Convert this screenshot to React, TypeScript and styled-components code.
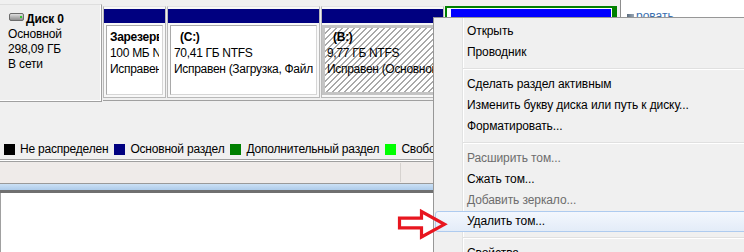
import React from "react";
import styled, { createGlobalStyle, css } from "styled-components";

const FONT = `"Liberation Sans", Arial, sans-serif`;

const GlobalStyle = createGlobalStyle`
  html, body { margin: 0; padding: 0; }
  body {
    background: #f0f0f0;
    font-family: ${FONT};
    font-size: 12px;
    color: #000;
  }
  #root { width: 744px; height: 252px; overflow: hidden; }
`;

const Screen = styled.div`
  position: relative;
  display: flex;
  width: 744px;
  height: 252px;
  overflow: hidden;
  background: #f0f0f0;
`;

const MainColumn = styled.div`
  width: 620px;
  flex: none;
  display: flex;
  flex-direction: column;
`;

const DiskRow = styled.div`
  display: flex;
  align-items: flex-start;
  padding-top: 4px;
  height: 102px;
  box-sizing: border-box;
  flex: none;
`;

const DiskInfo = styled.div`
  width: 102px;
  height: 98px;
  flex: none;
  box-sizing: border-box;
  background: #eeeeee;
  border-top: 1px solid #dedede;
  border-right: 1px solid #a0a0a0;
  border-bottom: 1px solid #a0a0a0;
  box-shadow: inset -1px -1px 0 #ffffff;
  padding: 7px 0 0 8px;
  line-height: 15px;
  letter-spacing: -0.15px;
  white-space: nowrap;
`;

const DiskTitle = styled.div`
  display: flex;
  align-items: flex-start;
  gap: 2px;
  font-weight: bold;
`;

const DiskIconSvg = styled.svg`
  flex: none;
  margin: 1px 0 0 1px;
`;

const PartitionRow = styled.div`
  display: flex;
  gap: 1px;
  margin: 2px 0 0 1px;
  padding-bottom: 2px;
  border-bottom: 1px solid #a0a0a0;
`;

const Cell = styled.div<{ $w: number }>`
  width: ${(p) => p.$w}px;
  height: 92px;
  flex: none;
  box-sizing: border-box;
  display: flex;
  flex-direction: column;
  border: 1px solid #b9b9b9;
  border-top-color: #e4e4e4;
  padding: 2px 0;
  background: #f8f8f8;
`;

const ExtendedCell = styled.div<{ $w: number }>`
  width: ${(p) => p.$w}px;
  height: 92px;
  flex: none;
  box-sizing: border-box;
  display: flex;
  flex-direction: column;
  border: 2px solid #008000;
  border-right-width: 5px;
  padding: 1px 1px 0 4px;
  background: #ffffff;
`;

const Bar = styled.div<{ $color: string }>`
  height: 14px;
  flex: none;
  background: ${(p) => p.$color};
`;

const VolumeBox = styled.div<{ $hatched?: boolean }>`
  flex: 1;
  margin: 2px 2px 0;
  border: 1px solid #a9a9a9;
  border-right-color: #d6d6d6;
  border-bottom-color: #d6d6d6;
  background: #ffffff;
  padding: 3px 3px 0 3px;
  overflow: hidden;
  line-height: 16px;
  letter-spacing: -0.3px;
  ${(p) =>
    p.$hatched &&
    css`
      margin: 2px 0 0;
      border: 3px solid #c4c4c4;
      padding: 1px 0 0 2px;
      background: repeating-linear-gradient(
        135deg,
        #ffffff 0 3.1px,
        #a9a9a9 3.1px 4.243px
      );
    `}
`;

const VolumeLine = styled.div<{ $bold?: boolean }>`
  white-space: pre;
  overflow: hidden;
  font-weight: ${(p) => (p.$bold ? "bold" : "normal")};
`;

const Legend = styled.div`
  display: flex;
  align-items: center;
  height: 16px;
  margin-top: 39px;
  padding-left: 4px;
  white-space: nowrap;
  overflow: hidden;
  letter-spacing: -0.2px;
  flex: none;
`;

const LegendItem = styled.div`
  display: flex;
  align-items: center;
  gap: 5px;
  margin-right: 6px;
  flex: none;
`;

const Swatch = styled.span<{ $color: string }>`
  width: 11px;
  height: 11px;
  flex: none;
  background: ${(p) => p.$color};
`;

const Divider = styled.div`
  margin-top: 2px;
  height: 1px;
  flex: none;
  background: #ffffff;
  border-top: 1px solid #a0a0a0;
  border-bottom: 1px solid #a0a0a0;
`;

const Toolbar = styled.div`
  height: 21px;
  flex: none;
  display: flex;
  background: #efebe9;
`;

const ToolbarSection = styled.div<{ $w: number }>`
  width: ${(p) => p.$w}px;
  margin: 1px 0;
  box-sizing: border-box;
  border-right: 1px solid #d6d2cf;
`;

const Splitter = styled.div`
  height: 6px;
  flex: none;
  border-top: 1px solid #9a9a9a;
  border-bottom: 3px solid #707070;
  background: linear-gradient(to bottom, #cbe0f5, #aecbea);
`;

const ListArea = styled.div`
  flex: 1;
  background: #ffffff;
  border-left: 1px solid #a0a0a0;
`;

const ActionsPane = styled.div`
  flex: 1;
  background: #ffffff;
  border-left: 1px solid #8d8d8d;
  padding: 9px 0 0 6px;
  line-height: 15px;
  overflow: hidden;
`;

const ActionItem = styled.div`
  display: flex;
  align-items: flex-start;
  gap: 2px;
  color: #3a6fb0;
  white-space: nowrap;
`;

const ActionIcon = styled.span`
  width: 7px;
  height: 10px;
  margin-top: 5px;
  flex: none;
  background: linear-gradient(to right, #5b6b7c, #9aa9b8);
`;

const Menu = styled.div`
  position: absolute;
  left: 433px;
  top: 17px;
  width: 330px;
  height: 260px;
  box-sizing: border-box;
  background: #f0f0f0;
  border: 1px solid #979797;
  padding: 3px 0 0 1px;
  letter-spacing: -0.1px;
  z-index: 2;
  &::before {
    content: "";
    position: absolute;
    left: 28px;
    top: 0;
    bottom: 0;
    width: 1px;
    background: #e2e3e3;
    box-shadow: 1px 0 0 #ffffff;
  }
`;

const MenuItem = styled.div<{ $disabled?: boolean; $active?: boolean }>`
  position: relative;
  z-index: 1;
  height: 21px;
  box-sizing: border-box;
  line-height: 19px;
  padding-left: 31px;
  border: 1px solid transparent;
  border-radius: 3px;
  white-space: nowrap;
  color: ${(p) => (p.$disabled ? "#6d6d6d" : "#000000")};
  ${(p) =>
    p.$active &&
    css`
      border-color: #aecbef;
      background: linear-gradient(to bottom, #f3f7fd, #e3ecf8);
    `}
`;

const MenuSeparator = styled.div`
  position: relative;
  z-index: 1;
  height: 1px;
  margin: 5px 0 5px 28px;
  background: #e0e0e0;
  box-shadow: 0 1px 0 #ffffff;
`;

const Arrow = styled.svg`
  position: absolute;
  left: 396px;
  top: 207px;
  z-index: 3;
`;

type Vol = {
  w: number;
  title: string;
  size: string;
  status: string;
  hatched?: boolean;
};

const volumes: Vol[] = [
  {
    w: 63,
    title: "Зарезервировано системой",
    size: "100 МБ NTFS",
    status: "Исправен (Система, Активен, Основной раздел)",
  },
  {
    w: 153,
    title: "  (C:)",
    size: "70,41 ГБ NTFS",
    status:
      "Исправен (Загрузка, Файл подкачки, Аварийный дамп памяти, Основной раздел)",
  },
  {
    w: 123,
    title: "  (B:)",
    size: "9,77 ГБ NTFS",
    status: "Исправен (Основной раздел)",
    hatched: true,
  },
];

const legend = [
  { color: "#000000", label: "Не распределен" },
  { color: "#000080", label: "Основной раздел" },
  { color: "#008000", label: "Дополнительный раздел" },
  { color: "#00ff00", label: "Свободно" },
  { color: "#0000ff", label: "Логический диск" },
];

type MenuEntry =
  | { sep: true }
  | { sep?: false; label: string; disabled?: boolean; active?: boolean };

const menu: MenuEntry[] = [
  { label: "Открыть" },
  { label: "Проводник" },
  { sep: true },
  { label: "Сделать раздел активным" },
  { label: "Изменить букву диска или путь к диску..." },
  { label: "Форматировать..." },
  { sep: true },
  { label: "Расширить том...", disabled: true },
  { label: "Сжать том..." },
  { label: "Добавить зеркало...", disabled: true },
  { label: "Удалить том...", active: true },
  { sep: true },
  { label: "Свойства" },
];

function DiskIcon() {
  return (
    <DiskIconSvg width="15" height="8" viewBox="0 0 15 8">
      <defs>
        <linearGradient id="hdd" x1="0" y1="0" x2="0" y2="1">
          <stop offset="0" stopColor="#e6e6e6" />
          <stop offset="0.5" stopColor="#b4b4b4" />
          <stop offset="1" stopColor="#8a8a8a" />
        </linearGradient>
      </defs>
      <rect x="0.5" y="0.5" width="14" height="7" rx="1.5" fill="url(#hdd)" stroke="#6b6b6b" />
      <rect x="11" y="3" width="2" height="2" fill="#32c832" />
    </DiskIconSvg>
  );
}

export default function App() {
  return (
    <>
      <GlobalStyle />
      <Screen>
        <MainColumn>
          <DiskRow>
            <DiskInfo>
              <DiskTitle>
                <DiskIcon />
                <span>Диск 0</span>
              </DiskTitle>
              <div>Основной</div>
              <div>298,09 ГБ</div>
              <div>В сети</div>
            </DiskInfo>
            <PartitionRow>
              {volumes.map((v) => (
                <Cell key={v.size} $w={v.w}>
                  <Bar $color="#000080" />
                  <VolumeBox $hatched={v.hatched}>
                    <VolumeLine $bold>{v.title}</VolumeLine>
                    <VolumeLine>{v.size}</VolumeLine>
                    <VolumeLine>{v.status}</VolumeLine>
                  </VolumeBox>
                </Cell>
              ))}
              <ExtendedCell $w={172}>
                <Bar $color="#0000ff" />
              </ExtendedCell>
            </PartitionRow>
          </DiskRow>
          <Legend>
            {legend.map((l) => (
              <LegendItem key={l.label}>
                <Swatch $color={l.color} />
                <span>{l.label}</span>
              </LegendItem>
            ))}
          </Legend>
          <Divider />
          <Toolbar>
            <ToolbarSection $w={401} />
          </Toolbar>
          <Splitter />
          <ListArea />
        </MainColumn>
        <ActionsPane>
          <ActionItem>
            <ActionIcon />
            <span>ровать</span>
          </ActionItem>
        </ActionsPane>
        <Menu>
          {menu.map((m, i) =>
            m.sep ? (
              <MenuSeparator key={i} />
            ) : (
              <MenuItem key={i} $disabled={m.disabled} $active={m.active}>
                {m.label}
              </MenuItem>
            )
          )}
        </Menu>
        <Arrow width="52" height="34" viewBox="0 0 52 34">
          <path
            d="M3.5 11.2 H25.5 V4.5 L48.5 17.3 L25.5 30 V20.8 H3.5 Z"
            fill="none"
            stroke="#e8161f"
            strokeWidth="3.2"
          />
        </Arrow>
      </Screen>
    </>
  );
}
